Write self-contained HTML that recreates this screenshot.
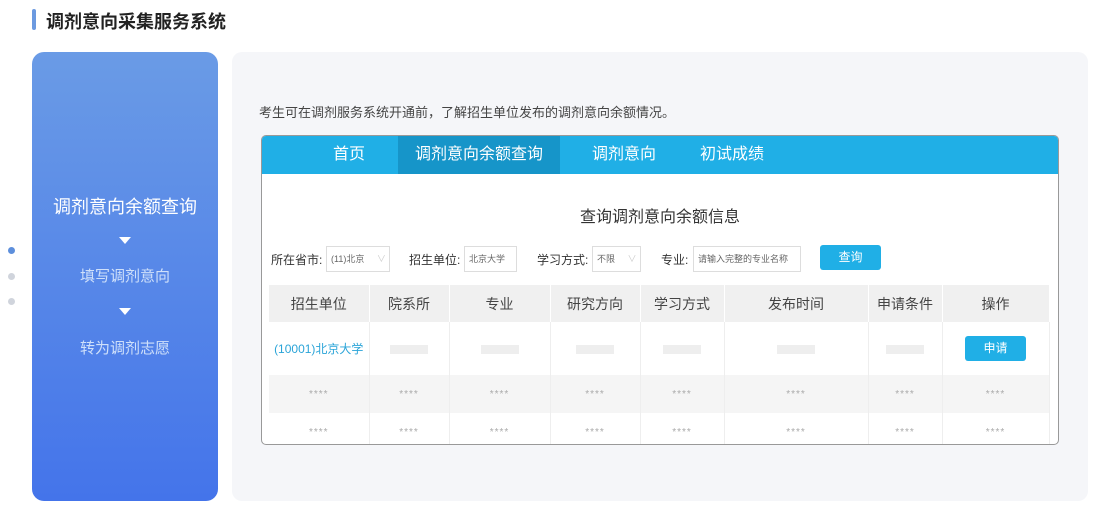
<!DOCTYPE html><html><head><meta charset="utf-8"><style>
*{margin:0;padding:0;box-sizing:border-box}
body{width:1106px;height:515px;background:#fff;font-family:"Liberation Sans","Noto Sans CJK SC",sans-serif;position:relative;overflow:hidden;color:#333}
.a{position:absolute}
.title{left:46px;top:8px;font-size:18px;font-weight:bold;color:#222}
.bar{left:32px;top:9px;width:4px;height:21px;background:#6c9ae0;border-radius:2px}
.side{left:32px;top:52px;width:186px;height:449px;border-radius:12px;background:linear-gradient(#6a9be6,#4474ea)}
.side div{position:absolute;width:186px;text-align:center;color:#fff}
.tri{left:87px;width:0;height:0;border-left:6px solid transparent;border-right:6px solid transparent;border-top:7px solid #fff}
.dot{width:7px;height:7px;border-radius:50%;left:8px;background:#d0d4dc}
.main{left:232px;top:52px;width:856px;height:449px;background:#f5f6f9;border-radius:10px}
.frame{left:261px;top:135px;width:798px;height:310px;border:1px solid #999;border-radius:5px;background:#fff;overflow:hidden}
.nav{left:0;top:0;width:796px;height:38px;background:#20afe6}
.nav span{position:absolute;top:0;height:38px;line-height:38px;color:#fff;font-size:16px;text-align:center}
.lbl{font-size:12px;color:#333;top:115px}
.box{top:110px;height:26px;border:1px solid #ddd;font-size:9px;color:#666;line-height:24px;padding-left:4px}
table{position:absolute;left:7px;top:149px;border-collapse:collapse;font-size:14px}
td{text-align:center;border-right:1px solid #eee;color:#444}
tr.h td{background:#f0f0f0;height:37px;border-right:1px solid #fff}
.s{font-size:10px;color:#aaa;letter-spacing:1px}
.g{display:inline-block;width:38px;height:9px;background:#eee}
</style></head><body>
<div class="a bar"></div><div class="a title">调剂意向采集服务系统</div>
<div class="a side">
<div style="top:141px;font-size:18px">调剂意向余额查询</div>
<div class="tri" style="top:185px;width:0"></div>
<div style="top:213px;font-size:15px;color:#cfe0fa">填写调剂意向</div>
<div class="tri" style="top:256px;width:0"></div>
<div style="top:285px;font-size:15px;color:#cfe0fa">转为调剂志愿</div>
</div>
<div class="a dot" style="top:247px;background:#5d8fdc"></div>
<div class="a dot" style="top:273px"></div>
<div class="a dot" style="top:298px"></div>
<div class="a main"></div>
<div class="a" style="left:259px;top:102px;font-size:13px;color:#444">考生可在调剂服务系统开通前，了解招生单位发布的调剂意向余额情况。</div>
<div class="a frame">
<div class="a nav">
<span style="left:60px;width:54px">首页</span>
<span style="left:136px;width:162px;background:#1695c9">调剂意向余额查询</span>
<span style="left:320px;width:84px">调剂意向</span>
<span style="left:430px;width:80px">初试成绩</span>
</div>
<div class="a" style="left:0;width:796px;top:67px;text-align:center;font-size:16px;color:#333">查询调剂意向余额信息</div>
<div class="a lbl" style="left:9px">所在省市:</div><div class="a box" style="left:64px;width:64px">(11)北京 <span style="color:#ccc;margin-left:10px">∨</span></div>
<div class="a lbl" style="left:147px">招生单位:</div><div class="a box" style="left:202px;width:53px">北京大学</div>
<div class="a lbl" style="left:275px">学习方式:</div><div class="a box" style="left:330px;width:49px">不限 <span style="color:#ccc;margin-left:10px">∨</span></div>
<div class="a lbl" style="left:399px">专业:</div><div class="a box" style="left:431px;width:108px">请输入完整的专业名称</div>
<div class="a" style="left:558px;top:109px;width:61px;height:25px;background:#20afe6;border-radius:3px;color:#fff;font-size:12px;text-align:center;line-height:25px">查询</div>
<table>
<tr class="h"><td style="width:100px">招生单位</td><td style="width:80px">院系所</td><td style="width:101px">专业</td><td style="width:90px">研究方向</td><td style="width:84px">学习方式</td><td style="width:144px">发布时间</td><td style="width:74px">申请条件</td><td style="width:107px">操作</td></tr>
<tr style="height:53px"><td style="color:#2aa4d8;font-size:12px">(10001)北京大学</td><td><span class="g"></span></td><td><span class="g"></span></td><td><span class="g"></span></td><td><span class="g"></span></td><td><span class="g"></span></td><td><span class="g"></span></td><td><span style="display:inline-block;width:61px;height:25px;background:#20afe6;border-radius:3px;color:#fff;font-size:12px;line-height:25px">申请</span></td></tr>
<tr style="height:38px;background:#f5f5f5"><td class="s">****</td><td class="s">****</td><td class="s">****</td><td class="s">****</td><td class="s">****</td><td class="s">****</td><td class="s">****</td><td class="s">****</td></tr>
<tr style="height:38px"><td class="s">****</td><td class="s">****</td><td class="s">****</td><td class="s">****</td><td class="s">****</td><td class="s">****</td><td class="s">****</td><td class="s">****</td></tr>
</table>
</div>
</body></html>
